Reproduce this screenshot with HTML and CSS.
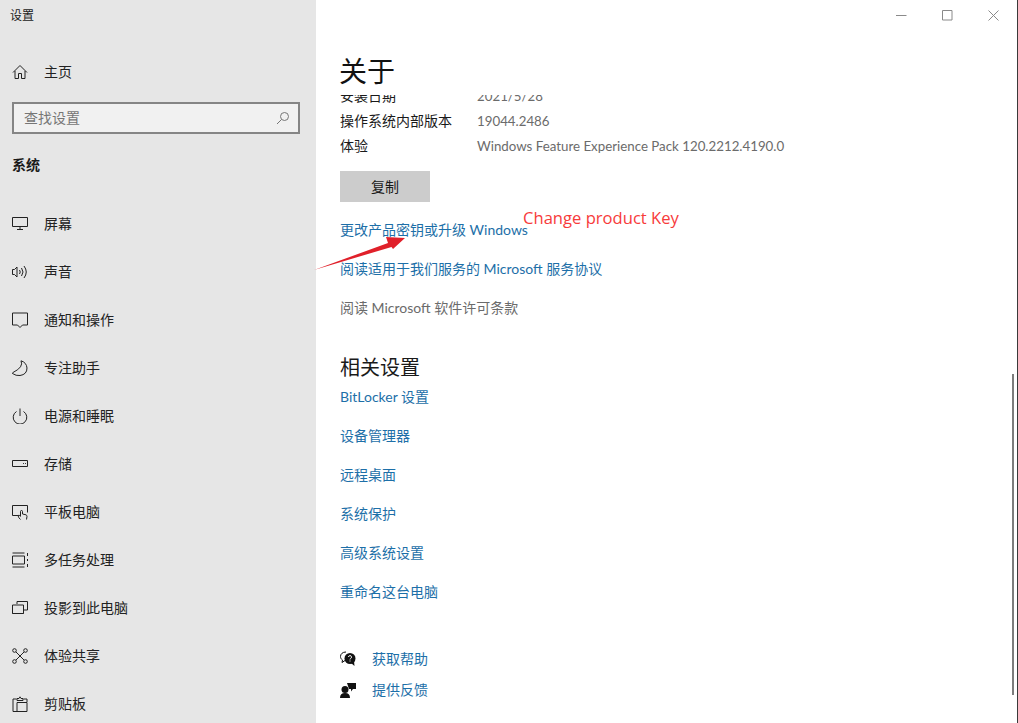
FILE: index.html
```html
<!DOCTYPE html>
<html lang="zh-CN">
<head>
<meta charset="utf-8">
<title>设置</title>
<link rel="stylesheet" href="styles.css">
</head>
<body>
<div class="window">
  <aside class="sidebar">
    <div class="app-title">设置</div>
    <div class="nav-row home">
      <svg class="icon" viewBox="0 0 16 16"><path d="M1 8.500 8 1.500l7 7M3 7v7.500h3.500V9.500h3v5H13V7"/></svg>
      <span>主页</span>
    </div>
    <div class="search"><span>查找设置</span>
      <svg class="search-icon" viewBox="0 0 14 14"><circle cx="8.500" cy="5.500" r="4"/><path d="M5.500 8.500 1 13"/></svg>
    </div>
    <div class="section">系统</div>
    <nav class="nav">
      <div class="nav-row"><svg class="icon" viewBox="0 0 16 16"><path d="M.5 1.500h15v9H.5zM8 10.500v3M5 13.500h6"/></svg><span>屏幕</span></div>
      <div class="nav-row"><svg class="icon" viewBox="0 0 16 16"><path d="M.5 5.500v5h2L5 13V3L2.500 5.500zM7.500 6q1.500 2 0 4M9.500 4q3 4 0 8M12 2q4.500 6 0 12"/></svg><span>声音</span></div>
      <div class="nav-row"><svg class="icon" viewBox="0 0 16 16"><path d="M.5 1h15v12h-5L8 15.500 5.500 13h-5z"/></svg><span>通知和操作</span></div>
      <div class="nav-row"><svg class="icon" viewBox="0 0 16 16"><path d="M9 .800Q12 7 1 12.500q-1 .5-.5 1Q4 16 8 15.500 15 14.500 15 8 14.500 2.500 9 .800z"/></svg><span>专注助手</span></div>
      <div class="nav-row"><svg class="icon" viewBox="0 0 16 16"><path d="M4.500 3.500a6.800 6.800 0 1 0 7 0M8 .500v7.500"/></svg><span>电源和睡眠</span></div>
      <div class="nav-row"><svg class="icon" viewBox="0 0 16 16"><path d="M.5 4.500h15v6H.5zM11 7.500h.9M13 7.500h.9"/></svg><span>存储</span></div>
      <div class="nav-row"><svg class="icon" viewBox="0 0 16 16"><path d="M6 11.500H.5v-10h15v7M8.500 15.500q-2-1.500-2.500-4l1.200-.2 1.300 1V7.500a1 1 0 0 1 2 0V10l3.500.8q1 .5 1 1.500l-.5 3.200"/></svg><span>平板电脑</span></div>
      <div class="nav-row"><svg class="icon" viewBox="0 0 16 16"><path d="M.5 1h12M.5 15h12M.5 4h12v8H.5zM15.500 1v3M15.500 7v2M15.500 12v3"/></svg><span>多任务处理</span></div>
      <div class="nav-row"><svg class="icon" viewBox="0 0 16 16"><path d="M5 4V1.500h10.500V10H12M.5 5h11v8.500H.5zM.5 13.500h11"/></svg><span>投影到此电脑</span></div>
      <div class="nav-row"><svg class="icon" viewBox="0 0 16 16"><circle cx="2.500" cy="2.500" r="1.800"/><circle cx="13.500" cy="2.500" r="1.800"/><circle cx="2.500" cy="13.500" r="1.800"/><circle cx="13.500" cy="13.500" r="1.800"/><path d="m4 4 8 8M12 4l-8 8"/></svg><span>体验共享</span></div>
      <div class="nav-row"><svg class="icon" viewBox="0 0 16 16"><path d="M4.500 3H1v12.500h4M11.500 3H15v3M5 6.500h10v9H5zM5 4.500V2.500h2L8 .8l1 1.700h2v2z"/></svg><span>剪贴板</span></div>
    </nav>
  </aside>

  <main class="main">
    <div class="controls">
      <svg class="ctl" viewBox="0 0 11 11"><path d="M0 5.500h10.500"/></svg>
      <svg class="ctl" viewBox="0 0 11 11"><path d="M.5.500h9.500v9.500H.5z"/></svg>
      <svg class="ctl" viewBox="0 0 11 11"><path d="m.5.500 10 10M10.500.500l-10 10"/></svg>
    </div>
    <h1 class="title">关于</h1>
    <div class="scroll">
      <div class="scroll-inner">
        <dl class="spec"><dt>安装日期</dt><dd>2021/5/28</dd></dl>
        <dl class="spec"><dt>操作系统内部版本</dt><dd>19044.2486</dd></dl>
        <dl class="spec"><dt>体验</dt><dd>Windows Feature Experience Pack 120.2212.4190.0</dd></dl>
        <button class="copy">复制</button>
        <div class="links first">
          <a class="link">更改产品密钥或升级 Windows</a>
          <a class="link">阅读适用于我们服务的 Microsoft 服务协议</a>
          <a class="link muted">阅读 Microsoft 软件许可条款</a>
        </div>
        <h2 class="subtitle">相关设置</h2>
        <div class="links">
          <a class="link">BitLocker 设置</a>
          <a class="link">设备管理器</a>
          <a class="link">远程桌面</a>
          <a class="link">系统保护</a>
          <a class="link">高级系统设置</a>
          <a class="link">重命名这台电脑</a>
        </div>
        <div class="help">
          <div class="help-row">
            <svg class="help-icon" viewBox="0 0 16 16"><path class="outline" d="M6 1C2.500 1 .5 3 .5 5.500c0 1.500.7 2.700 2 3.500l-.5 2.500 3-2"/><circle class="solid" cx="10" cy="7.500" r="5.500"/><path class="solid" d="m11 12 3.500 3-.5-5z"/><path class="mark" d="M8.500 6a1.500 1.500 0 1 1 2 1.500q-.5.300-.5 1M10 9.500v1"/></svg>
            <a class="link">获取帮助</a>
          </div>
          <div class="help-row">
            <svg class="help-icon" viewBox="0 0 16 16"><circle class="solid" cx="5" cy="7.500" r="3.500"/><path class="solid" d="M0 16q0-5 5-5t5 5zM7 1h9v6h-3l-2 2.500V7H9z"/></svg>
            <a class="link">提供反馈</a>
          </div>
        </div>
      </div>
    </div>
    <div class="scrollbar"></div>
  </main>

  <svg class="arrow" viewBox="0 0 1018 723"><polygon points="314,270 388,243 386,237 405,238 393,249 391.500,247"/></svg>
  <div class="note">Change product Key</div>
</div>
</body>
</html>
```
FILE: styles.css
```css
* { box-sizing: border-box; }
html, body { margin: 0; height: 100%; overflow: hidden; background: #fff; }
body { font: 14px/20px "Lato", "Noto Sans CJK SC", sans-serif; color: #1a1a1a; }
.window { position: relative; display: flex; width: 1018px; height: 723px; overflow: hidden; }

.sidebar { width: 316px; flex: none; background: #e6e6e6; height: 723px; overflow: hidden; }
.app-title { height: 48px; padding: 7px 0 0 10px; font-size: 12px; line-height: 18px; }
.nav-row { display: flex; align-items: center; height: 48px; padding-left: 12px; gap: 16px; color: #222; }
.icon { width: 16px; height: 16px; flex: none; fill: none; stroke: #222; stroke-width: 1; }
.search { display: flex; align-items: center; justify-content: space-between; height: 32px; margin: 6px 16px 0 12px; padding: 0 8px 0 10px; border: 2px solid #858585; background: #f1f1f1; color: #767676; }
.search-icon { width: 14px; height: 14px; fill: none; stroke: #767676; }
.section { height: 66px; padding: 21px 0 0 12px; font-weight: 700; color: #1a1a1a; }

.main { position: relative; flex: 1; min-width: 0; padding-left: 24px; border-right: 1px solid #3a3a3a; background: #fff; }
.controls { display: flex; gap: 35px; height: 32px; padding: 10px 0 0 561px; margin-left: -5px; }
.ctl { width: 11px; height: 11px; flex: none; fill: none; stroke: #8a8a8a; }
.title { margin: 0 0 0 -1px; height: 63px; padding-top: 18px; font-size: 28px; line-height: 42px; font-weight: 400; color: #111; }
.scroll { height: 628px; overflow: hidden; }
.scroll-inner { margin-top: -12px; }

.spec { display: flex; align-items: center; height: 25px; margin: 0; }
.spec dt { width: 137px; flex: none; color: #1a1a1a; }
.spec dd { margin: 0; font-size: 13.3px; color: #6b6b6b; white-space: nowrap; }
.copy { display: block; width: 90px; height: 31px; margin: 13px 0 0; padding: 0; border: 0; background: #ccc; color: #1a1a1a; font: inherit; }

.links { display: flex; flex-direction: column; gap: 19px; }
.links.first { margin-top: 18px; }
.link { color: #1d6fa8; white-space: nowrap; }
.link.muted { color: #6b6b6b; }
.subtitle { margin: 34px 0 5px; height: 30px; font-size: 20px; line-height: 30px; font-weight: 400; color: #1a1a1a; }

.help { display: flex; flex-direction: column; gap: 11px; margin-top: 47px; }
.help-row { display: flex; align-items: center; gap: 16px; height: 20px; }
.help-icon { width: 16px; height: 16px; flex: none; }
.outline { fill: none; stroke: #111; }
.solid { fill: #111; }
.mark { fill: none; stroke: #fff; }

.scrollbar { position: absolute; right: 3px; top: 374px; width: 2px; height: 321px; background: #7d7d7d; }
.arrow { position: absolute; left: 0; top: 0; width: 1018px; height: 723px; pointer-events: none; }
.arrow polygon { fill: #e0202a; }
.note { position: absolute; left: 523px; top: 207px; font-family: "Open Sans", sans-serif; font-size: 16.6px; line-height: 22px; color: #f73b3b; white-space: nowrap; }
```
